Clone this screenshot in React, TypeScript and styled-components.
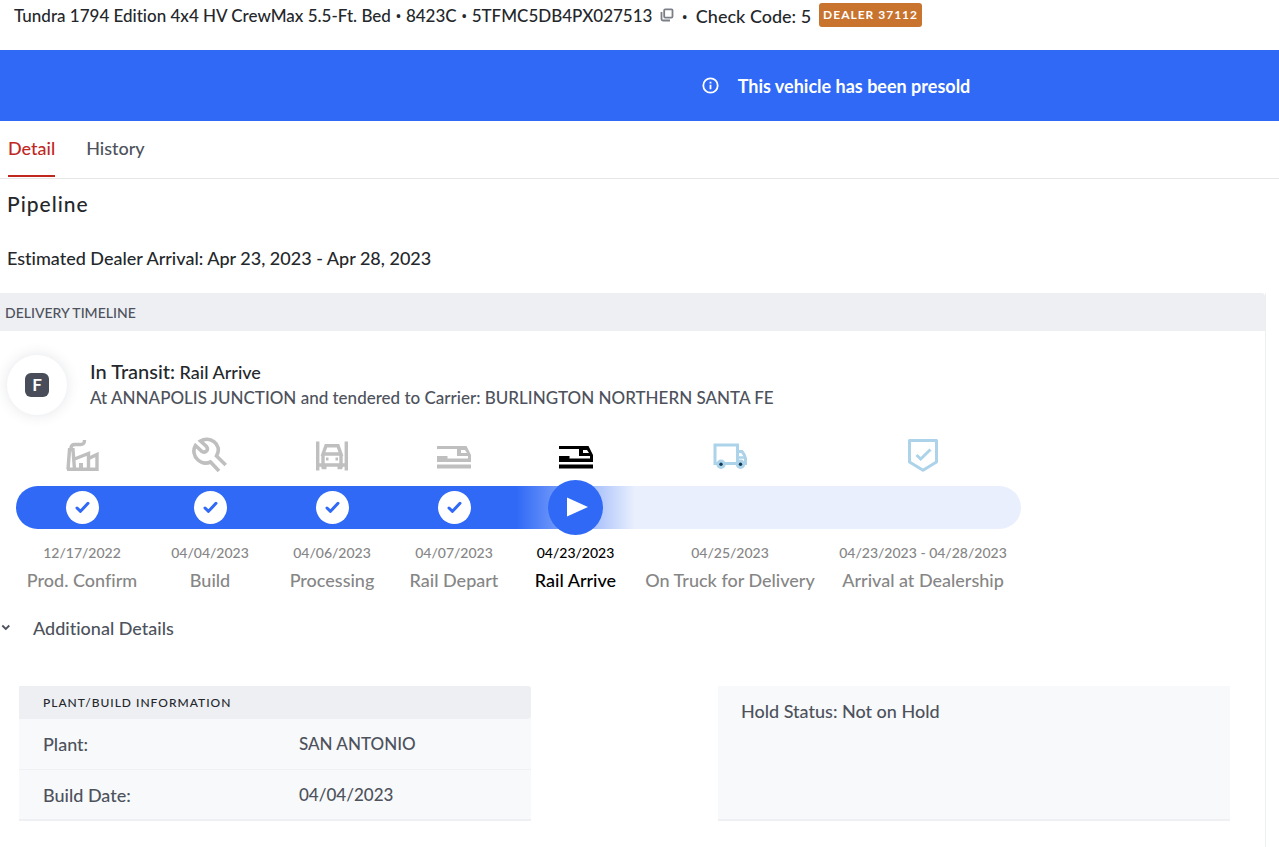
import React from "react";
import styled, { createGlobalStyle } from "styled-components";

const blue = "#2f69f6";
const paleBlue = "#e9effd";
const ink = "#24272b";
const slate = "#4d525c";
const grey = "#868686";
const panel = "#f8f9fb";
const band = "#edeff3";

const GlobalStyle = createGlobalStyle`
  *, *::before, *::after { box-sizing: border-box; }
  body {
    margin: 0;
    background: #fff;
    color: ${slate};
    font-family: Lato, "Open Sans", sans-serif;
    font-size: 18px;
    font-weight: 500;
    font-variant-ligatures: none;
    line-height: 24px;
  }
  button { font: inherit; color: inherit; background: none; border: 0; padding: 0; cursor: pointer; }
  h1, h2, h3, p, ol { margin: 0; padding: 0; font-weight: inherit; }
`;

const VehicleHeader = styled.header`
  display: flex;
  align-items: flex-start;
  height: 50px;
  padding: 3px 14px 0;
  color: ${ink};
  font-size: 17px;
  line-height: 26px;
  white-space: nowrap;
`;

const VehicleTitle = styled.h1`
  font-size: 17px;
`;

const Dot = styled.span`
  font-family: "Open Sans", sans-serif;
  font-size: 17px;
  line-height: 1;
`;

const CopyButton = styled.button`
  display: flex;
  margin: 5px 7px 0 8px;
  color: #7b7f87;
`;

const CheckCode = styled.span`
  margin-left: 8px;
  font-size: 18px;
`;

const DealerBadge = styled.span`
  margin-left: 8px;
  padding: 0 4px;
  border-radius: 3px;
  background: #c8732e;
  color: #fff;
  font-size: 12px;
  font-weight: 700;
  line-height: 24px;
  letter-spacing: 1px;
`;

const Banner = styled.div`
  display: flex;
  align-items: center;
  justify-content: center;
  gap: 19px;
  height: 71px;
  padding-left: 393px;
  background: ${blue};
  color: #fff;
  font-weight: 700;
`;

const Tabs = styled.nav`
  display: flex;
  gap: 31px;
  height: 58px;
  padding: 0 8px;
  border-bottom: 1px solid #e6e6e6;
`;

const Tab = styled.a<{ $active?: boolean }>`
  height: 56px;
  padding-top: 15px;
  border-bottom: 2px solid ${(p) => (p.$active ? "#c0271f" : "transparent")};
  color: ${(p) => (p.$active ? "#c0271f" : slate)};
  text-decoration: none;
`;

const Intro = styled.div`
  display: flex;
  flex-direction: column;
  gap: 30px;
  padding: 13px 7px 23px;
  color: ${ink};
`;

const PageTitle = styled.h2`
  font-size: 21px;
  letter-spacing: 1px;
`;

const Section = styled.section`
  margin-right: 13px;
  padding-bottom: 40px;
  border-right: 1px solid #eeeff1;
`;

const SectionTitle = styled.h3`
  padding: 8px 5px 6px;
  border-radius: 0 4px 0 0;
  background: ${band};
  font-size: 14px;
`;

const Status = styled.div`
  display: flex;
  align-items: center;
  gap: 23px;
  padding: 24px 7px 22px;
`;

const StatusDisc = styled.div`
  display: grid;
  place-items: center;
  width: 60px;
  height: 60px;
  border-radius: 50%;
  background: #fff;
  box-shadow: 0 0 14px rgba(60, 70, 90, 0.14);
`;

const StatusLetter = styled.span`
  width: 24px;
  border-radius: 6px;
  background: #484d59;
  color: #fff;
  font-size: 17px;
  font-weight: 700;
  text-align: center;
`;

const StatusText = styled.div`
  display: flex;
  flex-direction: column;
  gap: 2px;
  padding-bottom: 2px;
`;

const StatusHeading = styled.p`
  color: ${ink};
`;

const StatusLabel = styled.span`
  font-size: 20px;
`;

const StatusNote = styled.p`
  font-size: 17px;
`;

const Timeline = styled.ol`
  display: grid;
  grid-template-columns: 132fr 124fr 120fr 124fr 119fr 190fr 196fr;
  max-width: 1005px;
  margin-left: 16px;
  list-style: none;
`;

type StepState = "done" | "active" | "future";

const Step = styled.li<{ $state: StepState }>`
  display: flex;
  flex-direction: column;
  align-items: center;
  color: ${(p) => (p.$state === "active" ? "#000" : grey)};
  white-space: nowrap;
`;

const StepIcon = styled.div<{ $state: StepState }>`
  height: 49px;
  color: ${(p) =>
    p.$state === "active" ? "#000" : p.$state === "done" ? "#bfbfbf" : "#acd3e9"};
  svg { display: block; }
`;

const fills: Record<StepState, string> = {
  done: blue,
  active: `linear-gradient(90deg, ${blue}, ${paleBlue})`,
  future: paleBlue,
};

const StepBar = styled.div<{ $state: StepState }>`
  display: flex;
  align-items: center;
  justify-content: center;
  align-self: stretch;
  height: 43px;
  background: ${(p) => fills[p.$state]};
  ${Step}:first-child & { border-radius: 22px 0 0 22px; }
  ${Step}:last-child & { border-radius: 0 22px 22px 0; }
`;

const Marker = styled.span<{ $active?: boolean }>`
  display: grid;
  place-items: center;
  flex: none;
  width: ${(p) => (p.$active ? 55 : 33)}px;
  height: ${(p) => (p.$active ? 55 : 33)}px;
  border-radius: 50%;
  background: ${(p) => (p.$active ? blue : "#fff")};
  color: ${(p) => (p.$active ? "#fff" : blue)};
`;

const StepDate = styled.time`
  margin-top: 12px;
  font-size: 14px;
`;

const StepName = styled.span`
  margin-top: 3px;
`;

const DetailsToggle = styled.button`
  display: flex;
  align-items: center;
  gap: 22px;
  margin-top: 24px;
`;

const Cards = styled.div`
  display: grid;
  grid-template-columns: 1fr 1fr;
  column-gap: 187px;
  padding: 46px 35px 0 19px;
`;

const Card = styled.div`
  border-bottom: 2px solid #eff0f3;
  background: ${panel};
`;

const HoldStatus = styled.p`
  padding: 13px 23px;
`;

const InfoTable = styled.table`
  width: 100%;
  table-layout: fixed;
  border-collapse: separate;
  border-spacing: 0;
  text-align: left;
`;

const InfoHead = styled.th`
  height: 33px;
  padding: 0 24px;
  border-radius: 0 4px 4px 0;
  background: ${band};
  color: ${ink};
  font-size: 12px;
  font-weight: 500;
  letter-spacing: 1px;
`;

const InfoLabel = styled.th`
  height: 50px;
  padding: 0 24px;
  font-weight: 500;
  tr + tr > & { border-top: 1px solid #f0f1f4; }
`;

const InfoValue = styled.td`
  padding: 0 24px;
  font-size: 17px;
  tr + tr > & { border-top: 1px solid #f0f1f4; }
`;

const line = { fill: "none", stroke: "currentColor", strokeWidth: 3 };

const Icon = ({ weight = 3, children }: { weight?: number; children: React.ReactNode }) => (
  <svg width="36" height="36" viewBox="0 0 36 36" aria-hidden="true" {...line} strokeWidth={weight}>
    {children}
  </svg>
);

const FactoryIcon = () => (
  <Icon weight={3.4}>
    <path d="M4 32.300 L5.500 12.800 H9 L10.500 32.300" />
    <path d="M3 32.300 H33 V17.500 L24.500 21.500 V16.500 L10.500 22 M24.500 20 V32" />
    <path d="M7 13 V11 Q7 7.500 11 7.500 H16 Q20.500 8 20.500 3" />
    <path d="M17 32 V26" strokeWidth="4" />
  </Icon>
);

const WrenchIcon = () => (
  <Icon weight={3.6}>
    <path d="M33.700 28 L24.500 19 C28 13 26 7.500 22 4.700 C18 1.800 12.500 1.500 8.500 4 L14.500 9.500 C17 13 13.500 16.500 10 14.500 L3.500 8.500 C0.800 13 1.500 19 6 23 C10 26.500 14 27 18.500 25 L27 34" />
  </Icon>
);

const GarageIcon = () => (
  <Icon weight={3.4}>
    <path d="M3.700 4.500 V33.500 M32.300 4.500 V33.500 M3.700 28 H32.300" />
    <path d="M9 17 L12 8.800 H24 L27 17 Z M9 16.500 V31.500 M27 16.500 V31.500" />
    <path d="M12 22 H14.500 M21.500 22 H24" strokeWidth="3" />
    <path d="M8 30.500 H12.500 M23.500 30.500 H28" />
  </Icon>
);

const TrainIcon = () => (
  <Icon>
    <g fill="currentColor" stroke="none">
      <path
        fillRule="evenodd"
        d="M1 9 H30.500 L35 18 V25 H1 V19 H11.500 V21.500 H32 V19 H21 V12 H1 Z M25 13 V16 H31 L29 13 Z"
      />
      <path d="M1 27.500 H35 V31.500 H1 Z" />
    </g>
  </Icon>
);

const TruckIcon = () => (
  <Icon>
    <path d="M6 26.500 H3 V8 H25.500 V26.500 H12 M25.500 14.500 H30 Q33 18 33.500 21.500 V26.500 H30" />
    <path d="M27 20.500 H33" strokeWidth="2.500" />
    <circle cx="9" cy="27.300" r="4.700" fill="currentColor" stroke="none" />
    <circle cx="28.500" cy="27.300" r="4.700" fill="currentColor" stroke="none" />
    <circle cx="9" cy="27.300" r="1.700" fill="#123a52" stroke="none" />
    <circle cx="28.500" cy="27.300" r="1.700" fill="#123a52" stroke="none" />
  </Icon>
);

const ShieldIcon = () => (
  <Icon>
    <path d="M4.500 3.500 H31.500 V25 L18 33.300 L4.500 25 Z" strokeLinejoin="round" />
    <path d="M11.500 18 L15.700 22 L25.500 12.500" />
  </Icon>
);

const CheckMark = () => (
  <svg width="15" height="13" viewBox="0 0 15 13" aria-hidden="true" {...line}>
    <path d="M2 7 L5.500 10.300 L13 2.300" strokeLinecap="round" strokeLinejoin="round" />
  </svg>
);

const PlayMark = () => (
  <svg width="26" height="22" viewBox="0 0 26 22" aria-hidden="true">
    <path d="M4 0.500 L25 10 L4 19.500 Z" fill="currentColor" />
  </svg>
);

const CopyIcon = () => (
  <svg width="14" height="14" viewBox="0 0 14 14" aria-hidden="true" {...line} strokeWidth="1.800">
    <rect x="4.200" y="1.300" width="8.300" height="8.300" rx="1" />
    <path d="M1.500 4 V11 Q1.500 12.500 3 12.500 H10" />
  </svg>
);

const InfoIcon = () => (
  <svg width="17" height="17" viewBox="0 0 17 17" aria-hidden="true" {...line} strokeWidth="1.800">
    <circle cx="8.500" cy="8.500" r="7.200" />
    <path d="M8.500 7.800 V12.200 M8.500 4.800 V6.500" />
  </svg>
);

const ChevronIcon = () => (
  <svg width="11" height="8" viewBox="0 0 11 8" aria-hidden="true" {...line} strokeWidth="1.800">
    <path d="M2.300 1.500 L5.800 5 L9.300 1.500" />
  </svg>
);

const steps: { icon: React.FC; state: StepState; date: string; name: string }[] = [
  { icon: FactoryIcon, state: "done", date: "12/17/2022", name: "Prod. Confirm" },
  { icon: WrenchIcon, state: "done", date: "04/04/2023", name: "Build" },
  { icon: GarageIcon, state: "done", date: "04/06/2023", name: "Processing" },
  { icon: TrainIcon, state: "done", date: "04/07/2023", name: "Rail Depart" },
  { icon: TrainIcon, state: "active", date: "04/23/2023", name: "Rail Arrive" },
  { icon: TruckIcon, state: "future", date: "04/25/2023", name: "On Truck for Delivery" },
  { icon: ShieldIcon, state: "future", date: "04/23/2023 - 04/28/2023", name: "Arrival at Dealership" },
];

export default function App() {
  return (
    <>
      <GlobalStyle />
      <VehicleHeader>
        <VehicleTitle>
          Tundra 1794 Edition 4x4 HV CrewMax 5.5-Ft. Bed <Dot>•</Dot> 8423C <Dot>•</Dot>{" "}
          5TFMC5DB4PX027513
        </VehicleTitle>
        <CopyButton type="button" aria-label="Copy VIN">
          <CopyIcon />
        </CopyButton>
        <div>
          <Dot>•</Dot>
          <CheckCode>Check Code: 5</CheckCode>
        </div>
        <DealerBadge>DEALER 37112</DealerBadge>
      </VehicleHeader>
      <Banner role="status">
        <InfoIcon />
        <span>This vehicle has been presold</span>
      </Banner>
      <Tabs>
        <Tab href="#detail" $active aria-current="page">Detail</Tab>
        <Tab href="#history">History</Tab>
      </Tabs>
      <main>
        <Intro>
          <PageTitle>Pipeline</PageTitle>
          <p>Estimated Dealer Arrival: Apr 23, 2023 - Apr 28, 2023</p>
        </Intro>
        <Section>
          <SectionTitle>DELIVERY TIMELINE</SectionTitle>
          <Status>
            <StatusDisc>
              <StatusLetter>F</StatusLetter>
            </StatusDisc>
            <StatusText>
              <StatusHeading>
                <StatusLabel>In Transit:</StatusLabel> Rail Arrive
              </StatusHeading>
              <StatusNote>
                At ANNAPOLIS JUNCTION and tendered to Carrier: BURLINGTON NORTHERN SANTA FE
              </StatusNote>
            </StatusText>
          </Status>
          <Timeline>
            {steps.map(({ icon: Glyph, state, date, name }) => (
              <Step key={name} $state={state}>
                <StepIcon $state={state}>
                  <Glyph />
                </StepIcon>
                <StepBar $state={state}>
                  {state === "done" && (
                    <Marker>
                      <CheckMark />
                    </Marker>
                  )}
                  {state === "active" && (
                    <Marker $active>
                      <PlayMark />
                    </Marker>
                  )}
                </StepBar>
                <StepDate>{date}</StepDate>
                <StepName>{name}</StepName>
              </Step>
            ))}
          </Timeline>
          <DetailsToggle type="button" aria-expanded="true">
            <ChevronIcon />
            Additional Details
          </DetailsToggle>
          <Cards>
            <Card>
              <InfoTable>
                <thead>
                  <tr>
                    <InfoHead colSpan={2}>PLANT/BUILD INFORMATION</InfoHead>
                  </tr>
                </thead>
                <tbody>
                  <tr>
                    <InfoLabel scope="row">Plant:</InfoLabel>
                    <InfoValue>SAN ANTONIO</InfoValue>
                  </tr>
                  <tr>
                    <InfoLabel scope="row">Build Date:</InfoLabel>
                    <InfoValue>04/04/2023</InfoValue>
                  </tr>
                </tbody>
              </InfoTable>
            </Card>
            <Card>
              <HoldStatus>Hold Status: Not on Hold</HoldStatus>
            </Card>
          </Cards>
        </Section>
      </main>
    </>
  );
}
